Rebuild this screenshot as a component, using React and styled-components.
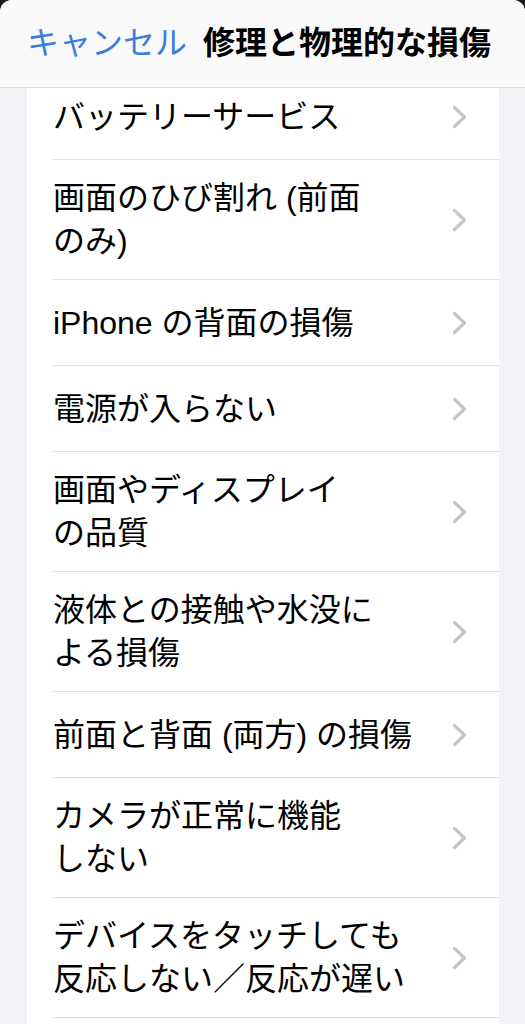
import React from "react";
import styled, { createGlobalStyle } from "styled-components";

const Global = createGlobalStyle`
  html, body { margin: 0; padding: 0; }
  body {
    background: #1c1c1e;
    font-family: "Liberation Sans", "Noto Sans CJK JP", sans-serif;
    -webkit-font-smoothing: antialiased;
  }
  * { box-sizing: border-box; }
`;

const Sheet = styled.div`
  width: 525px;
  height: 1024px;
  background: #f2f2f7;
  border-radius: 12px 12px 0 0;
  overflow: hidden;
  display: flex;
  flex-direction: column;
`;

const Header = styled.header`
  flex: none;
  height: 88px;
  background: #f9f9f9;
  border-bottom: 1px solid #d9d9dc;
  display: flex;
  align-items: center;
  gap: 16px;
  padding: 0 0 8px 27px;
  position: relative;
  z-index: 1;
`;

const Cancel = styled.span`
  font-size: 32px;
  color: #3b7ddf;
  white-space: nowrap;
`;

const Title = styled.h1`
  margin: 0;
  font-size: 32px;
  font-weight: 700;
  color: #000;
  white-space: nowrap;
`;

const Scroll = styled.div`
  flex: 1;
  overflow: hidden;
  padding: 0 26px 0 27px;
`;

const Card = styled.ul`
  list-style: none;
  margin: -14px 0 0;
  padding: 0 0 60px;
  background: #fff;
`;

const Row = styled.li`
  padding-left: 26px;
`;

const RowInner = styled.div`
  display: flex;
  align-items: center;
  min-height: 86px;
  padding: 17px 32px 16px 0;
  border-bottom: 1px solid #e2e2e4;
`;

const Label = styled.div`
  flex: 1;
  font-size: 32px;
  line-height: 43px;
  color: #000;
`;

const Line = styled.span`
  display: block;
  white-space: nowrap;
`;

const Chevron = () => (
  <svg width="15" height="24" viewBox="0 0 15 24" style={{ flex: "none" }}>
    <polyline
      points="2.5,2.5 12.5,12 2.5,21.5"
      fill="none"
      stroke="#c5c5c8"
      strokeWidth="3.2"
      strokeLinecap="round"
      strokeLinejoin="round"
    />
  </svg>
);

const items = [
  ["バッテリーサービス"],
  ["画面のひび割れ (前面", "のみ)"],
  ["iPhone の背面の損傷"],
  ["電源が入らない"],
  ["画面やディスプレイ", "の品質"],
  ["液体との接触や水没に", "よる損傷"],
  ["前面と背面 (両方) の損傷"],
  ["カメラが正常に機能", "しない"],
  ["デバイスをタッチしても", "反応しない／反応が遅い"],
];

export default function App() {
  return (
    <>
      <Global />
      <Sheet>
        <Header>
          <Cancel>キャンセル</Cancel>
          <Title>修理と物理的な損傷</Title>
        </Header>
        <Scroll>
          <Card>
            {items.map((lines, i) => (
              <Row key={i}>
                <RowInner>
                  <Label>
                    {lines.map((l, j) => (
                      <Line key={j}>{l}</Line>
                    ))}
                  </Label>
                  <Chevron />
                </RowInner>
              </Row>
            ))}
          </Card>
        </Scroll>
      </Sheet>
    </>
  );
}
